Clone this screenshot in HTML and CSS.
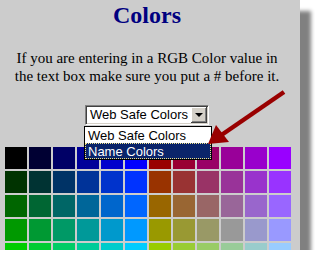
FILE: index.html
```html
<!DOCTYPE html>
<html lang="en">
<head>
    <meta charset="UTF-8">
    <title>Colors</title>
    <link rel="stylesheet" href="styles.css">
</head>
<body>
    <div class="panel">
        <h2 class="title">Colors</h2>
        <p class="note">If you are entering in a RGB Color value in<br>the text box make sure you put a # before it.</p>

        <div class="picker">
            <div class="select">
                <span class="select-value">Web Safe Colors</span>
                <span class="select-btn"><span class="caret"></span></span>
            </div>
            <ul class="options">
                <li class="option">Web Safe Colors</li>
                <li class="option selected">Name Colors</li>
            </ul>
        </div>

        <div class="swatches" id="swatches"></div>
    </div>

    <svg class="arrow" width="315" height="265" viewBox="0 0 315 265">
        <line x1="284" y1="92" x2="220" y2="136" stroke="#990000" stroke-width="4.5"/>
        <polygon points="208,144 216,125 229,142" fill="#990000"/>
    </svg>

    <script>
        // web safe palette: rows step the green, columns step blue then red
        var hex = ['00', '33', '66', '99', 'CC', 'FF'];
        var grid = document.getElementById('swatches');
        for (var g = 0; g < 5; g++) {
            for (var c = 0; c < 12; c++) {
                var r = c < 6 ? '00' : '99';
                var b = hex[c % 6];
                var cell = document.createElement('div');
                cell.className = 'swatch';
                cell.style.background = '#' + r + hex[g] + b;
                grid.appendChild(cell);
            }
        }
    </script>
</body>
</html>
```

FILE: styles.css
```css
* {
    margin: 0;
    padding: 0;
    box-sizing: border-box;
}

body {
    background: #fff;
    font-family: 'Liberation Serif', 'Times New Roman', serif;
    color: #000;
}

.panel {
    width: 300px;
    height: 250px;
    padding: 3px 6px 0 0;
    background: #cccccc;
    box-shadow: 11px 11px 4px #808080;
    overflow: hidden;
}

.title {
    font-size: 24px;
    line-height: 24px;
    font-weight: bold;
    color: #000080;
    text-align: center;
}

.note {
    margin-top: 22px;
    font-size: 15px;
    line-height: 18.4px;
    text-align: center;
}

/* fake select, shown opened */
.picker {
    position: relative;
    width: 124px;
    margin: 19px auto 0;
    font-family: 'Liberation Sans', Arial, sans-serif;
    font-size: 13px;
    white-space: nowrap;
}

.select {
    display: flex;
    align-items: center;
    height: 20px;
    background: #fff;
    border: 1px solid;
    border-color: #808080 #fff #fff #808080;
    box-shadow: inset 1px 1px #404040, inset -1px -1px #d4d0c8;
    padding: 1px;
}

.select-value {
    flex: 1;
    padding-left: 3px;
    line-height: 16px;
    overflow: hidden;
}

.select-btn {
    width: 16px;
    height: 16px;
    display: flex;
    align-items: center;
    justify-content: center;
    background: #d4d0c8;
    box-shadow: inset -1px -1px #404040, inset 1px 1px #fff, inset -2px -2px #808080;
}

.caret {
    width: 0;
    height: 0;
    border-left: 4px solid transparent;
    border-right: 4px solid transparent;
    border-top: 4px solid #000;
}

.options {
    list-style: none;
    position: absolute;
    left: -1px;
    top: 21px;
    width: 128px;
    background: #fff;
    border: 1px solid #000;
}

.option {
    height: 16px;
    line-height: 15px;
    padding-left: 2px;
    border: 1px solid transparent;
}

.option.selected {
    background: #0a246a;
    color: #fff;
    border: 1px dotted #f2e48a;
}

.swatches {
    display: grid;
    grid-template-columns: repeat(12, 22px);
    grid-auto-rows: 22px;
    gap: 2px;
    margin-top: 22px;
    padding-left: 5px;
}

.arrow {
    position: absolute;
    top: 0;
    left: 0;
    pointer-events: none;
}
```
